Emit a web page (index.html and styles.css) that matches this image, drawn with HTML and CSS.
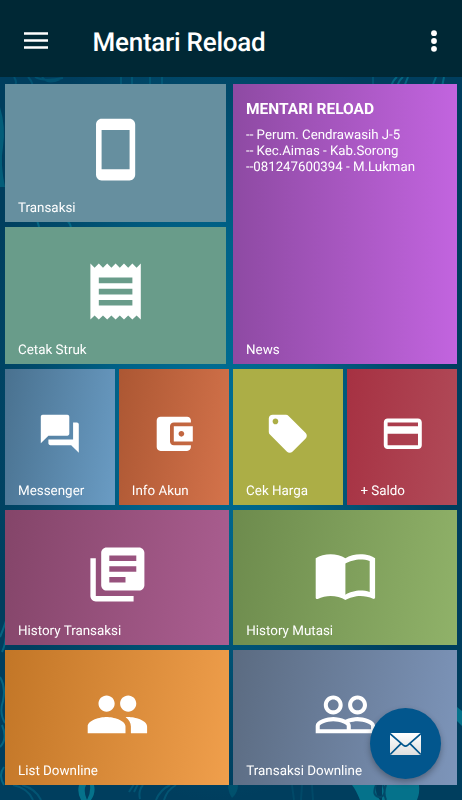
FILE: index.html
```html
<!DOCTYPE html>
<html lang="id">
<head>
<meta charset="utf-8">
<title>Mentari Reload</title>
<link rel="stylesheet" href="styles.css">
</head>
<body>
<div class="app">
  <svg class="wallpaper" viewBox="0 0 462 723" aria-hidden="true">
    <g fill="none" stroke="#087f99" stroke-width="2" opacity=".6">
      <path d="M14 0q4 6 0 10M28 0q8 8 3 20M35 0q8 5 28 1M42 0q6 8 18 2M121 0v8M132 0v8M150 0v8M162 0v8M373 0v8" opacity=".5"/>
      <path d="M391 10q2-7 6-10M397 10q2-7 6-10M404 10l4-10M432 10l4-10M442 10l2-10"/>
      <path d="M66 143q4 2 5 8M37 143l2 7M0 560q5-12 7-20M2 575q3-6 4-16M0 600q6 10 3 24q-4 12 2 22M0 670q8-8 2-22M4 690q-6 8 0 18"/>
      <path d="M13 708q15 3 20 15M22 708q14 4 19 15M129 715l5-8M134 715l4-8M140 722q-2-8 3-14M156 723q4-10 14-15M164 723q3-10 12-15" opacity=".6"/>
      <path d="M292 708l2 15M302 708l-1 15M312 708l1 15" opacity=".3"/>
    </g>
    <g fill="#078096" opacity=".8">
      <path d="M79 708h7q-3 6 1 15h-6q-4-7-2-15zM90 708h4q2 8-3 15h-4q4-7 3-15z"/>
      <path d="M352 708h24q-1 10 4 15h-20q-4-10-8-15zM382 708h37q1 8-2 15h-35z"/>
      <path d="M228 708h10q0 8-6 13q-4-6-4-13z" opacity=".35"/>
      <path d="M0 30q6 20 3 40q-3 16 2 40H0z" opacity=".6"/>
      <path d="M457 630l5 4v15l-5-5z"/>
    </g>
    <path d="M376 708q-5 12 5 12q6-3 2-12M386 708q-3 8 0 15" fill="none" stroke="#024968" stroke-width="2"/>
  </svg>
  <header class="bar">
    <svg class="menu" viewBox="0 0 24 18"><path d="M0 .2h24v2.6H0zM0 7.2h24v2.6H0zM0 14.2h24v2.6H0z"/></svg>
    <h1 class="title">Mentari Reload</h1>
    <svg class="more" viewBox="0 0 8 22"><circle cx="4" cy="3.2" r="2.9"/><circle cx="4" cy="11" r="2.9"/><circle cx="4" cy="18.8" r="2.9"/></svg>
  </header>
  <main class="board">
    <section class="top">
      <div class="stack">
        <div class="tile transaksi">
          <svg class="icon large" viewBox="0 0 24 24"><path d="M17 1.01L7 1c-1.1 0-1.99.9-1.99 2v18c0 1.1.89 2 1.99 2h10c1.1 0 2-.9 2-2V3c0-1.1-.9-1.99-2-1.99zM17 19H7V5h10v14z"/></svg>
          <span class="label">Transaksi</span>
        </div>
        <div class="tile struk">
          <svg class="icon large" viewBox="0 0 24 24"><path d="M18 17H6v-2h12v2zm0-4H6v-2h12v2zm0-4H6V7h12v2zM3 22l1.5-1.5L6 22l1.5-1.5L9 22l1.5-1.5L12 22l1.5-1.5L15 22l1.5-1.5L18 22l1.5-1.5L21 22V2l-1.5 1.5L18 2l-1.5 1.5L15 2l-1.5 1.5L12 2l-1.5 1.5L9 2 7.5 3.5 6 2 4.5 3.5 3 2v20z"/></svg>
          <span class="label">Cetak Struk</span>
        </div>
      </div>
      <div class="tile news">
        <div class="article">
          <h2 class="headline">MENTARI RELOAD</h2>
          <p class="text">-- Perum. Cendrawasih J-5<br>-- Kec.Aimas - Kab.Sorong<br>--081247600394 - M.Lukman</p>
        </div>
        <span class="label">News</span>
      </div>
    </section>
    <section class="quad">
      <div class="tile messenger">
        <svg class="icon small" viewBox="0 0 24 24"><path d="M21 6h-2v9H6v2c0 .55.45 1 1 1h11l4 4V7c0-.55-.45-1-1-1zm-4 6V3c0-.55-.45-1-1-1H3c-.55 0-1 .45-1 1v14l4-4h10c.55 0 1-.45 1-1z"/></svg>
        <span class="label">Messenger</span>
      </div>
      <div class="tile akun">
        <svg class="icon small" viewBox="0 0 24 24"><path d="M21 18v1c0 1.1-.9 2-2 2H5c-1.11 0-2-.9-2-2V5c0-1.1.89-2 2-2h14c1.1 0 2 .9 2 2v1h-9c-1.11 0-2 .9-2 2v8c0 1.1.89 2 2 2h9zm-9-2h10V8H12v8zm4-2.5c-.83 0-1.5-.67-1.5-1.5s.67-1.5 1.5-1.5 1.5.67 1.5 1.5-.67 1.5-1.5 1.5z"/></svg>
        <span class="label">Info Akun</span>
      </div>
      <div class="tile harga">
        <svg class="icon small" viewBox="0 0 24 24"><path d="M21.41 11.58l-9-9C12.05 2.22 11.55 2 11 2H4c-1.1 0-2 .9-2 2v7c0 .55.22 1.05.59 1.42l9 9c.36.36.86.58 1.41.58.55 0 1.05-.22 1.41-.59l7-7c.37-.36.59-.86.59-1.41 0-.55-.23-1.06-.59-1.42zM5.5 7C4.67 7 4 6.33 4 5.5S4.67 4 5.5 4 7 4.67 7 5.5 6.33 7 5.5 7z"/></svg>
        <span class="label">Cek Harga</span>
      </div>
      <div class="tile saldo">
        <svg class="icon small" viewBox="0 0 24 24"><path d="M20 4H4c-1.11 0-1.99.89-1.99 2L2 18c0 1.11.89 2 2 2h16c1.11 0 2-.89 2-2V6c0-1.11-.89-2-2-2zm0 14H4v-6h16v6zm0-10H4V6h16v2z"/></svg>
        <span class="label">+ Saldo</span>
      </div>
    </section>
    <section class="pair">
      <div class="tile history">
        <svg class="icon medium" viewBox="0 0 24 24"><path d="M4 6H2v14c0 1.1.9 2 2 2h14v-2H4V6zm16-4H8c-1.1 0-2 .9-2 2v12c0 1.1.9 2 2 2h12c1.1 0 2-.9 2-2V4c0-1.1-.9-2-2-2zm-1 9H9V9h10v2zm-4 4H9v-2h6v2zm4-8H9V5h10v2z"/></svg>
        <span class="label">History Transaksi</span>
      </div>
      <div class="tile mutasi">
        <svg class="icon medium" viewBox="0 0 24 24"><path d="M21 5c-1.11-.35-2.33-.5-3.5-.5-1.95 0-4.05.4-5.5 1.5-1.45-1.1-3.55-1.5-5.5-1.5S2.45 4.9 1 6v14.65c0 .25.25.5.5.5.1 0 .15-.05.25-.05C3.1 20.45 5.05 20 6.5 20c1.95 0 4.05.4 5.5 1.5 1.35-.85 3.8-1.5 5.5-1.5 1.65 0 3.35.3 4.75 1.05.1.05.15.05.25.05.25 0 .5-.25.5-.5V6c-.6-.45-1.25-.75-2-1zm0 13.5c-1.1-.35-2.3-.5-3.5-.5-1.7 0-4.15.65-5.5 1.5V8c1.35-.85 3.8-1.5 5.5-1.5 1.2 0 2.4.15 3.5.5v11.5z"/></svg>
        <span class="label">History Mutasi</span>
      </div>
      <div class="tile downline">
        <svg class="icon medium" viewBox="0 0 24 24"><path d="M16 11c1.66 0 2.99-1.34 2.99-3S17.66 5 16 5c-1.66 0-3 1.34-3 3s1.34 3 3 3zm-8 0c1.66 0 2.99-1.34 2.99-3S9.66 5 8 5C6.34 5 5 6.34 5 8s1.34 3 3 3zm0 2c-2.33 0-7 1.17-7 3.5V19h14v-2.5c0-2.33-4.67-3.5-7-3.5zm8 0c-.29 0-.62.02-.97.05 1.16.84 1.97 1.97 1.97 3.45V19h6v-2.5c0-2.33-4.67-3.5-7-3.5z"/></svg>
        <span class="label">List Downline</span>
      </div>
      <div class="tile trxdown">
        <svg class="icon medium" viewBox="0 0 24 24"><path d="M16.5 13c-1.2 0-3.07.34-4.5 1-1.43-.67-3.3-1-4.5-1C5.33 13 1 14.08 1 16.25V19h22v-2.75c0-2.17-4.33-3.25-6.5-3.25zm-4 4.5h-10v-1.25c0-.54 2.56-1.75 5-1.75s5 1.21 5 1.75v1.25zm9 0H14v-1.25c0-.46-.2-.86-.52-1.22.88-.3 1.96-.53 3.02-.53 2.44 0 5 1.21 5 1.75v1.25zM7.5 12c1.93 0 3.5-1.57 3.5-3.5S9.43 5 7.5 5 4 6.57 4 8.5 5.57 12 7.5 12zm0-5.5c1.1 0 2 .9 2 2s-.9 2-2 2-2-.9-2-2 .9-2 2-2zm9 5.5c1.93 0 3.5-1.57 3.5-3.5S18.43 5 16.5 5 13 6.57 13 8.5s1.57 3.5 3.5 3.5zm0-5.5c1.1 0 2 .9 2 2s-.9 2-2 2-2-.9-2-2 .9-2 2-2z"/></svg>
        <span class="label">Transaksi Downline</span>
      </div>
    </section>
  </main>
  <button class="fab" aria-label="Pesan">
    <svg class="mail" viewBox="0 0 31 22">
      <defs><linearGradient id="paper" x2="0" y2="1"><stop stop-color="#fff"/><stop offset="1" stop-color="#dedede"/></linearGradient></defs>
      <rect width="31" height="22" rx="1" fill="url(#paper)"/>
      <path d="M0 .6L13.2 12.2q2.3 1.9 4.6 0L31 .6M.2 21.4L11 10.6M30.8 21.4L20 10.6" fill="none" stroke="#02568d" stroke-width="1.7"/>
    </svg>
  </button>
</div>
</body>
</html>
```
FILE: styles.css
```css
* { box-sizing: border-box; }
body {
  margin: 0;
  font-family: Roboto, "Liberation Sans", sans-serif;
  color: #fff;
  text-rendering: geometricPrecision;
}
.app {
  position: relative;
  height: 800px;
  overflow: hidden;
  background: radial-gradient(ellipse 240px 400px at 215px 400px, #006d93 0%, #006288 40%, #004a6b 75%, #003e5e 100%);
}
.wallpaper {
  position: absolute;
  left: 0;
  top: 77px;
  width: 462px;
  height: 723px;
}
.bar {
  position: relative;
  display: flex;
  align-items: center;
  height: 77px;
  padding: 5px 24px 0;
  background: #002835;
}
.menu { width: 24px; height: 18px; fill: #fff; }
.title {
  flex: 1;
  margin: 0 0 0 44.5px;
  padding-top: 4px;
  font-size: 26px;
  font-weight: 500;
  letter-spacing: -.25px;
  line-height: 30px;
}
.more { width: 8px; height: 22px; fill: #fff; }
.board {
  position: relative;
  display: flex;
  flex-direction: column;
  gap: 5px;
  padding: 7.4px 5px 0;
}
.top {
  display: grid;
  grid-template-columns: 221px 224px;
  gap: 7px;
  height: 279.6px;
}
.stack { display: grid; grid-template-rows: 1fr 1fr; gap: 5px; }
.quad {
  display: grid;
  grid-template-columns: 109.5px 110px 110px 110px;
  gap: 4.3px;
  height: 136px;
}
.pair {
  display: grid;
  grid-template-columns: 224px 224px;
  grid-auto-rows: 135px;
  gap: 5px 4.3px;
}
.tile { display: grid; }
.tile > * { grid-area: 1 / 1; }
.icon { place-self: center; margin-bottom: 6.6px; fill: #fff; }
.large { width: 67.2px; height: 67.2px; }
.medium { width: 64.8px; height: 64.8px; }
.small { width: 45.6px; height: 45.6px; }
.label {
  align-self: end;
  padding: 0 0 5.4px 13px;
  font-size: 13.4px;
  line-height: 16px;
  white-space: nowrap;
}
.transaksi .label { padding-bottom: 5px; }
.article { padding: 16px 13px; }
.headline { margin: 0 0 9px; font-size: 15.5px; font-weight: 700; line-height: 19px; }
.text { margin: 0; font-size: 13.25px; line-height: 16px; }
.transaksi { background: #668f9f; }
.struk { background: #699c8a; }
.news { background: linear-gradient(90deg, #8e4aa3, #c264df); }
.messenger { background: linear-gradient(100deg, #49718f, #6a9cc4); }
.akun { background: linear-gradient(100deg, #ac5733, #d4734b); }
.harga { background: #acae46; }
.saldo { background: linear-gradient(100deg, #a63142, #b14b59); }
.history { background: linear-gradient(100deg, #844569, #ab5e91); }
.mutasi { background: linear-gradient(100deg, #6d8b4d, #90b269); }
.downline { background: linear-gradient(100deg, #c27627, #f09f4c); }
.trxdown { background: linear-gradient(100deg, #5b6b81, #7d95ba); }
.fab {
  position: absolute;
  left: 370px;
  top: 708px;
  display: grid;
  place-items: center;
  width: 71px;
  height: 71px;
  padding: 0;
  border: 0;
  border-radius: 50%;
  background: #02568d;
  box-shadow: 0 3px 6px rgba(0, 0, 0, .3);
}
.mail { width: 31px; height: 22px; }
```
